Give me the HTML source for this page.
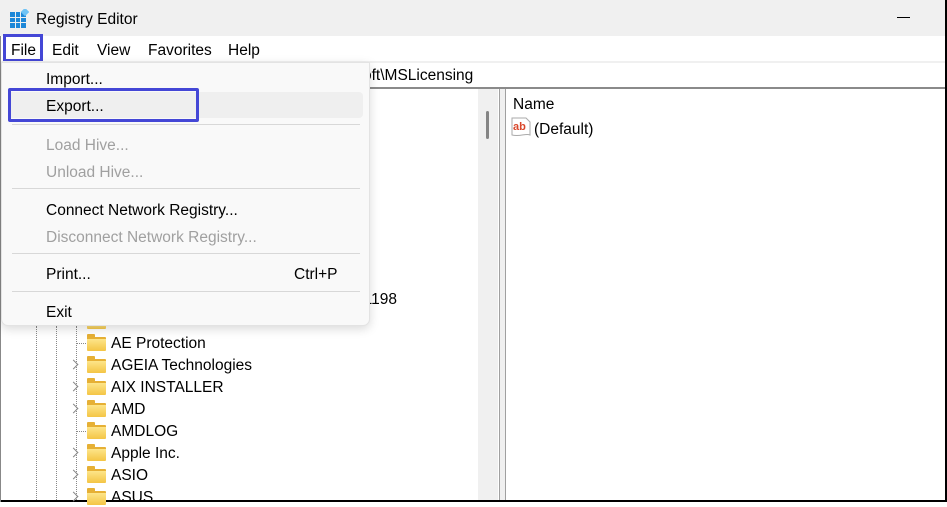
<!DOCTYPE html>
<html><head><style>
*{margin:0;padding:0;box-sizing:border-box}
body{width:947px;height:502px;overflow:hidden;background:#fff;font-family:"Liberation Sans",sans-serif;font-size:15.5px;color:#000;position:relative}
.a{position:absolute;white-space:nowrap}
.t{position:absolute;white-space:nowrap;line-height:18px;margin-top:1px}
.dis{color:#a0a0a0}
.sep{position:absolute;left:12px;width:348px;height:1px;background:#d8d8d8}
.f{position:absolute;width:19px;height:14px;background:linear-gradient(#fde58a,#f4c545);border-top:2px solid #e6b035;border-radius:1px}
.f:before{content:"";position:absolute;left:-0px;top:-5px;width:8px;height:4px;background:#e6b035;border-radius:1px 1px 0 0}
.ch{position:absolute;width:7px;height:7px;border-right:1.5px solid #888;border-bottom:1.5px solid #888;transform:rotate(-45deg)}
.dv{position:absolute;width:1px;border-left:1px dotted #888}
.dh{position:absolute;height:1px;border-top:1px dotted #888;width:9px}
</style></head><body>
<div class="a" style="left:0;top:0;width:945px;height:36px;background:#f0f0f0"></div>
<svg class="a" style="left:10px;top:9px" width="19" height="19" viewBox="0 0 19 19">
<rect x="0" y="3" width="16" height="16" fill="#1e88d8"/>
<g stroke="#f0f0f0" stroke-width="1"><line x1="5.5" y1="3" x2="5.5" y2="19"/><line x1="10.5" y1="3" x2="10.5" y2="19"/><line x1="0" y1="8.5" x2="16" y2="8.5"/><line x1="0" y1="13.5" x2="16" y2="13.5"/></g>
<rect x="12" y="0" width="6" height="6" fill="#6fc3f5" transform="rotate(45 15 3)"/>
</svg>
<div class="t" style="left:36px;top:10px">Registry Editor</div>
<div class="a" style="left:897px;top:17px;width:13px;height:1px;background:#000"></div>
<div class="t" style="left:11px;top:41px">File</div>
<div class="a" style="left:3px;top:34px;width:40px;height:28px;border:3px solid #4447d6"></div>
<div class="t" style="left:52px;top:41px">Edit</div>
<div class="t" style="left:97px;top:41px">View</div>
<div class="t" style="left:148px;top:41px">Favorites</div>
<div class="t" style="left:228px;top:41px">Help</div>
<div class="a" style="left:0;top:61px;width:945px;height:2px;background:#f0f0f0"></div>
<div class="t" style="left:363px;top:66px">oft\MSLicensing</div>
<div class="a" style="left:0;top:87px;width:945px;height:2px;background:#8a8a8a"></div>
<div class="a" style="left:478px;top:89px;width:20px;height:413px;background:#f0f0f0"></div>
<div class="a" style="left:486px;top:111px;width:3px;height:28px;background:#858585;border-radius:2px"></div>
<div class="a" style="left:499px;top:89px;width:1px;height:413px;background:#a0a0a0"></div>
<div class="a" style="left:500px;top:89px;width:5px;height:413px;background:#f0f0f0"></div>
<div class="a" style="left:505px;top:89px;width:1px;height:413px;background:#a0a0a0"></div>
<div class="t" style="left:513px;top:95px">Name</div>
<svg class="a" style="left:511px;top:117px" width="20" height="20" viewBox="0 0 20 20"><path d="M1 1h14l4 4v13c-4-2-10 2-18 0z" fill="#fff" stroke="#aaa"/><text x="2" y="13" font-family="Liberation Sans" font-weight="bold" font-size="11" fill="#d9472b">ab</text></svg>
<div class="t" style="left:534px;top:120px">(Default)</div>
<div class="a" style="left:945px;top:0;width:2px;height:502px;background:#000"></div>
<div class="a" style="left:0;top:500px;width:947px;height:2px;background:#000"></div>
<div class="a" style="left:0;top:36px;width:1px;height:466px;background:#888"></div>
<div class="dv" style="left:36px;top:326px;height:174px"></div>
<div class="dv" style="left:56px;top:326px;height:174px"></div>
<div class="dv" style="left:76px;top:326px;height:174px"></div>
<div class="t" style="left:355px;top:290px">61198</div>
<div class="f" style="left:87px;top:325px;height:4px;border-top:none"></div>
<div class="dh" style="left:77px;top:343px"></div><div class="f" style="left:87px;top:337px"></div><div class="t" style="left:111px;top:334px">AE Protection</div>
<div class="ch" style="left:70px;top:361px"></div><div class="f" style="left:87px;top:359px"></div><div class="t" style="left:111px;top:356px">AGEIA Technologies</div>
<div class="ch" style="left:70px;top:383px"></div><div class="f" style="left:87px;top:381px"></div><div class="t" style="left:111px;top:378px">AIX INSTALLER</div>
<div class="ch" style="left:70px;top:405px"></div><div class="f" style="left:87px;top:403px"></div><div class="t" style="left:111px;top:400px">AMD</div>
<div class="dh" style="left:77px;top:431px"></div><div class="f" style="left:87px;top:425px"></div><div class="t" style="left:111px;top:422px">AMDLOG</div>
<div class="ch" style="left:70px;top:449px"></div><div class="f" style="left:87px;top:447px"></div><div class="t" style="left:111px;top:444px">Apple Inc.</div>
<div class="ch" style="left:70px;top:471px"></div><div class="f" style="left:87px;top:469px"></div><div class="t" style="left:111px;top:466px">ASIO</div>
<div class="ch" style="left:70px;top:493px"></div><div class="f" style="left:87px;top:491px"></div><div class="t" style="left:111px;top:488px">ASUS</div>
<div class="a" style="left:1px;top:62px;width:369px;height:264px;background:#f9f9f9;border:1px solid #e3e3e3;border-radius:0 0 7px 7px;box-shadow:0 3px 10px rgba(0,0,0,.15)"></div>
<div class="a" style="left:8px;top:92px;width:355px;height:26px;background:#efefef;border-radius:4px"></div>
<div class="t" style="left:46px;top:70px">Import...</div>
<div class="t" style="left:46px;top:97px">Export...</div>
<div class="a" style="left:8px;top:88px;width:191px;height:34px;border:3px solid #4447d6;border-radius:2px"></div>
<div class="sep" style="top:124px"></div>
<div class="t dis" style="left:46px;top:136px">Load Hive...</div>
<div class="t dis" style="left:46px;top:163px">Unload Hive...</div>
<div class="sep" style="top:188px"></div>
<div class="t" style="left:46px;top:201px">Connect Network Registry...</div>
<div class="t dis" style="left:46px;top:228px">Disconnect Network Registry...</div>
<div class="sep" style="top:253px"></div>
<div class="t" style="left:46px;top:265px">Print...</div>
<div class="t" style="left:294px;top:265px">Ctrl+P</div>
<div class="sep" style="top:291px"></div>
<div class="t" style="left:46px;top:303px">Exit</div>
</body></html>
